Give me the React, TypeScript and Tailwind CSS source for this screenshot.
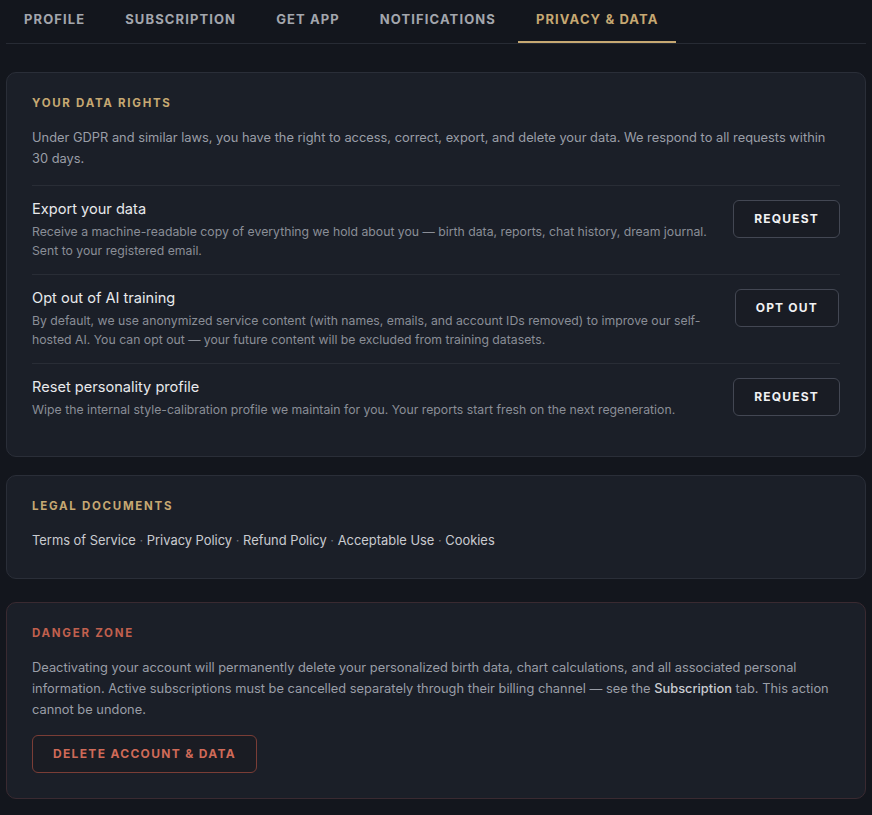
import React from "react";

const tabs = ["PROFILE", "SUBSCRIPTION", "GET APP", "NOTIFICATIONS", "PRIVACY & DATA"];

const rows = [
  {
    title: "Export your data",
    desc: "Receive a machine-readable copy of everything we hold about you — birth data, reports, chat history, dream journal. Sent to your registered email.",
    action: "REQUEST",
  },
  {
    title: "Opt out of AI training",
    desc: "By default, we use anonymized service content (with names, emails, and account IDs removed) to improve our self-hosted AI. You can opt out — your future content will be excluded from training datasets.",
    action: "OPT OUT",
  },
  {
    title: "Reset personality profile",
    desc: "Wipe the internal style-calibration profile we maintain for you. Your reports start fresh on the next regeneration.",
    action: "REQUEST",
  },
];

const legal = ["Terms of Service", "Privacy Policy", "Refund Policy", "Acceptable Use", "Cookies"];

function SectionTitle({ children, danger }: { children: React.ReactNode; danger?: boolean }) {
  return (
    <h2
      className={`text-[11.5px] font-bold leading-4 tracking-[0.15em] ${
        danger ? "text-[#c0604e]" : "text-[#c6a872]"
      }`}
    >
      {children}
    </h2>
  );
}

export default function App() {
  return (
    <div
      className="min-h-[815px] bg-[#13161d] px-[6px] pb-4 text-[#e6e7ea]"
      style={{ fontFamily: "Inter, 'Noto Sans', sans-serif" }}
    >
      <nav className="flex border-b border-[#272b34]">
        {tabs.map((t) => {
          const active = t === "PRIVACY & DATA";
          return (
            <div
              key={t}
              className={`px-[18px] pt-[11px] pb-[14px] mr-[4px] border-b-2 text-[13px] font-bold leading-4 tracking-[0.085em] ${
                active ? "border-[#c6a872] text-[#c6a872]" : "border-transparent text-[#a3a6ad]"
              }`}
            >
              {t}
            </div>
          );
        })}
      </nav>

      <section className="mt-[28px] rounded-[10px] border border-[#2a2e38] bg-[#1b1f28] px-[25px] pt-[22px] pb-[23px]">
        <SectionTitle>YOUR DATA RIGHTS</SectionTitle>
        <p className="mt-[16px] mb-[16px] text-[12.85px] leading-[21px] text-[#9a9ea7]">
          Under GDPR and similar laws, you have the right to access, correct, export, and delete your data. We respond to all requests within 30 days.
        </p>
        {rows.map((r, i) => (
          <div
            key={r.title}
            className="flex items-start gap-6 pt-3 pb-[14px] border-t border-[#292d36]"
          >
            <div className="flex-1">
              <div className="text-[14.6px] leading-[22px] text-[#e8e9ec]">{r.title}</div>
              <div className="mt-[2px] text-[12.25px] leading-[19px] text-[#8a8e97]">{r.desc}</div>
            </div>
            <button
              className={`mt-[2px] h-[38px] rounded-[6px] border border-[#434753] bg-[#191c24] px-5 text-[12px] font-bold tracking-[0.1em] text-[#f1f2f4] ${
                i === 1 ? "mr-[1px]" : ""
              }`}
            >
              {r.action}
            </button>
          </div>
        ))}
      </section>

      <section className="mt-[18px] rounded-[10px] border border-[#2a2e38] bg-[#1b1f28] px-[25px] pt-[22px] pb-[27px]">
        <SectionTitle>LEGAL DOCUMENTS</SectionTitle>
        <p className="mt-[16px] text-[12.9px] leading-[21px] text-[#c9cbd0]">
          {legal.map((l, i) => (
            <React.Fragment key={l}>
              {i > 0 && <span className="text-[#6c707a]"> · </span>}
              <span>{l}</span>
            </React.Fragment>
          ))}
        </p>
      </section>

      <section className="mt-[23px] rounded-[10px] border border-[#3a2a31] bg-[#1b1f28] px-[25px] pt-[22px] pb-[25px]">
        <SectionTitle danger>DANGER ZONE</SectionTitle>
        <p className="mt-[16px] text-[12.85px] leading-[21px] text-[#9a9ea7]">
          Deactivating your account will permanently delete your personalized birth data, chart calculations, and all associated personal information. Active subscriptions must be cancelled separately through their billing channel — see the{" "}
          <span className="font-medium text-[#c9cbd0]">Subscription</span> tab. This action cannot be undone.
        </p>
        <button className="mt-[15px] h-[38px] rounded-[6px] border border-[#7a3d36] bg-[#1a1c23] px-5 text-[12px] font-bold tracking-[0.11em] text-[#cf6a58]">
          DELETE ACCOUNT &amp; DATA
        </button>
      </section>
    </div>
  );
}
